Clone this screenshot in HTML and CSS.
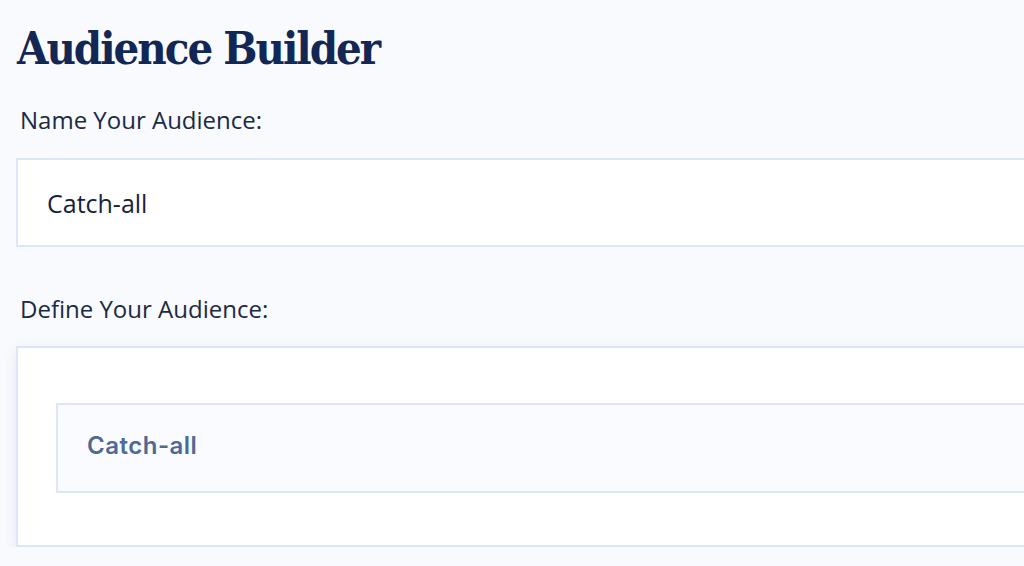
FILE: index.html
```html
<!DOCTYPE html>
<html lang="en">
<head>
	<meta charset="UTF-8">
	<title>Audience Builder</title>
	<link rel="stylesheet" href="styles.css">
</head>
<body>
	<div class="builder">
		<h1 class="title">Audience Builder</h1>
		<label class="label">Name Your Audience:</label>
		<div class="name-input">Catch-all</div>
		<label class="label label-define">Define Your Audience:</label>
		<div class="define">
			<div class="group">Catch-all</div>
		</div>
	</div>
</body>
</html>
```

FILE: styles.css
```css
*{
	margin: 0;
	padding: 0;
	box-sizing: border-box;
}
body{
	background-color: #f8fafd;
	overflow: hidden;
	font-family: "Open Sans", "Noto Sans", sans-serif;
}
.builder{
	width: 1200px;
	padding: 23px 0 0 16px;
}
.title{
	font-family: "DejaVu Serif Condensed", "DejaVu Serif", serif;
	font-stretch: condensed;
	font-weight: bold;
	font-size: 45px;
	line-height: 52px;
	color: #132754;
	padding-left: 1px;
	letter-spacing: -2px;
}
.label{
	display: block;
	margin-top: 29px;
	padding-left: 4px;
	font-size: 24px;
	line-height: 32px;
	color: #1b2945;
}
.name-input{
	margin-top: 22px;
	height: 89px;
	display: flex;
	align-items: center;
	padding-left: 29px;
	background-color: #fff;
	border: 2px solid #dce6f6;
	font-size: 25px;
	color: #17223d;
}
.label-define{
	margin-top: 46px;
}
.define{
	margin-top: 21px;
	padding: 55px 38px 52px;
	background-color: #fff;
	border: 2px solid #dce6f6;
	box-shadow: 0 5px 12px rgba(40,70,130,.1);
}
.group{
	height: 90px;
	display: flex;
	align-items: center;
	padding: 0 0 6px 29px;
	background-color: #f9fbfe;
	border: 2px solid #dce6f6;
	font-family: Inter, sans-serif;
	font-weight: 600;
	font-size: 24px;
	letter-spacing: .5px;
	color: #4e6a91;
}
```
